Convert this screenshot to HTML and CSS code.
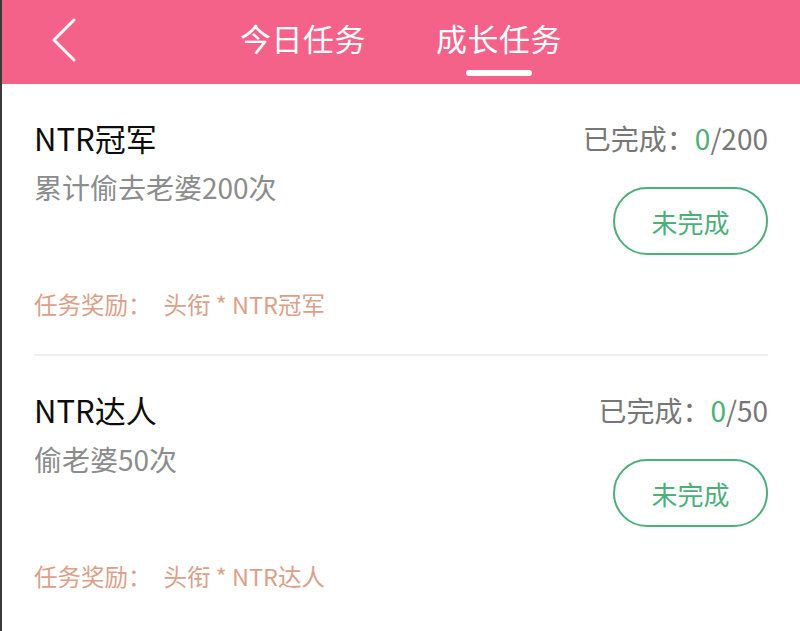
FILE: index.html
```html
<!DOCTYPE html>
<html lang="zh-CN">
  <head>
    <meta charset="UTF-8" />
    <meta name="viewport" content="width=device-width, initial-scale=1.0" />
    <title>成长任务</title>
    <link rel="stylesheet" href="styles.css">
  </head>
  <body>
    <div class="top-bar">
      <div class="back-button">
        <svg width="26" height="46" viewBox="0 0 26 46">
          <polyline points="23,3 3,23 23,43" fill="none" stroke="#fff" stroke-width="3" stroke-linecap="round" stroke-linejoin="round" />
        </svg>
      </div>
      <div class="tabs">
        <div class="tab">今日任务<span class="tab-line"></span></div>
        <div class="tab active">成长任务<span class="tab-line"></span></div>
      </div>
      <div></div>
    </div>

    <div class="task-list">
      <!-- 任务 1 -->
      <div class="task-item">
        <div class="task-left">
          <div class="task-title">NTR冠军</div>
          <div class="task-desc">累计偷去老婆200次</div>
          <div class="task-reward">任务奖励：<span class="reward-name">头衔 * NTR冠军</span></div>
        </div>
        <div class="task-right">
          <div class="task-progress">已完成：<span class="done-count">0</span>/200</div>
          <button class="status-button">未完成</button>
        </div>
      </div>
      <!-- 任务 2 -->
      <div class="task-item">
        <div class="task-left">
          <div class="task-title">NTR达人</div>
          <div class="task-desc">偷老婆50次</div>
          <div class="task-reward">任务奖励：<span class="reward-name">头衔 * NTR达人</span></div>
        </div>
        <div class="task-right">
          <div class="task-progress">已完成：<span class="done-count">0</span>/50</div>
          <button class="status-button">未完成</button>
        </div>
      </div>
    </div>
  </body>
</html>
```

FILE: styles.css
```css
body {
  margin: 0;
  background: #fff;
  font-family: "Noto Sans CJK SC", "Noto Sans", sans-serif;
  border-left: 2px solid #3a3a3a;
  min-height: 631px;
  box-sizing: border-box;
}
/* 顶部导航 */
.top-bar {
  display: grid;
  grid-template-columns: 1fr auto 1fr;
  height: 84px;
  background-color: #f4628a;
  color: #fff;
}
.back-button {
  padding: 17px 0 0 49px;
}
.tabs {
  display: flex;
  gap: 70px;
}
.tab {
  display: flex;
  flex-direction: column;
  align-items: center;
  padding-top: 17px;
  font-size: 31px;
  line-height: 42px;
  letter-spacing: 0.5px;
}
.tab-line {
  width: 66px;height: 6px;margin-top: 11px;border-radius: 3px;
}
.tab.active .tab-line {
  background-color: #fff;
}
/* 任务列表 */
.task-list {
  padding: 0 32px 0 32px;
}
.task-item {
  display: flex;
  justify-content: space-between;
  padding: 36px 0;
  border-bottom: 2px solid #f0f0f0;
}
.task-item:last-child {
  border-bottom: none;
}
.task-title {
  font-size: 31px;line-height: 36px;color: #0d0d0d;
}
.task-desc {
  font-size: 28px;line-height: 30px;color: #8c8c8c;margin-top: 16px;
}
.task-reward {
  font-size: 23.5px;line-height: 28px;color: #dc9f8a;margin-top: 88px;
}
.reward-name {
  margin-left: 12px;
}
.task-right {
  display: flex;
  flex-direction: column;
  align-items: flex-end;
}
.task-progress {
  font-size: 28px;line-height: 36px;color: #777;
}
.done-count {
  color: #4caf78;
}
.status-button {
  margin-top: 31px;
  width: 155px;
  height: 68px;
  border: 2px solid #4daf7c;
  border-radius: 34px;
  background: #fff;
  color: #4caf78;
  font-family: inherit;
  font-size: 26px;
  cursor: pointer;
}
```
